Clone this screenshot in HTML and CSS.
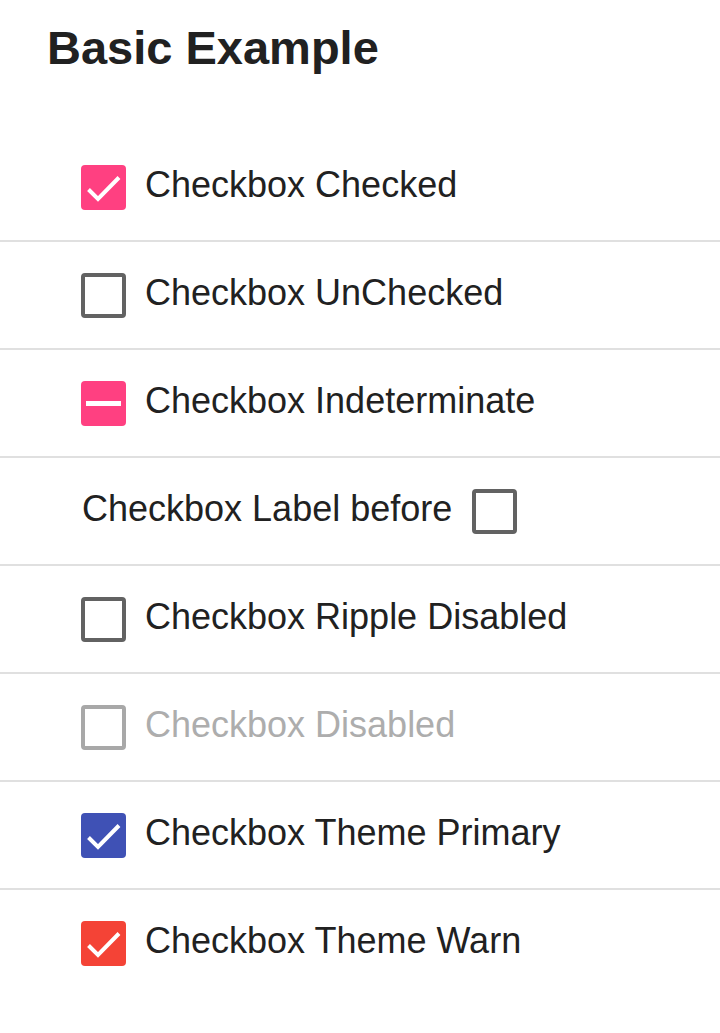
FILE: index.html
```html
<!DOCTYPE html>
<html lang="en">
<head>
<meta charset="utf-8">
<title>Basic Example</title>
<link rel="stylesheet" href="styles.css">
</head>
<body>
<div class="page">
  <h2 class="title">Basic Example</h2>
  <ul class="list">
    <li class="row">
      <span class="box box-accent">
        <svg class="check" viewBox="0 0 45 45"><polyline points="7.5,24.5 17,34 38,12.5"/></svg>
      </span>
      <span class="label">Checkbox Checked</span>
    </li>
    <li class="row">
      <span class="box box-empty"></span>
      <span class="label">Checkbox UnChecked</span>
    </li>
    <li class="row">
      <span class="box box-accent"><span class="dash"></span></span>
      <span class="label">Checkbox Indeterminate</span>
    </li>
    <li class="row">
      <span class="label label-before">Checkbox Label before</span>
      <span class="box box-empty"></span>
    </li>
    <li class="row">
      <span class="box box-empty"></span>
      <span class="label">Checkbox Ripple Disabled</span>
    </li>
    <li class="row row-disabled">
      <span class="box box-empty box-disabled"></span>
      <span class="label">Checkbox Disabled</span>
    </li>
    <li class="row">
      <span class="box box-primary">
        <svg class="check" viewBox="0 0 45 45"><polyline points="7.5,24.5 17,34 38,12.5"/></svg>
      </span>
      <span class="label">Checkbox Theme Primary</span>
    </li>
    <li class="row row-last">
      <span class="box box-warn">
        <svg class="check" viewBox="0 0 45 45"><polyline points="7.5,24.5 17,34 38,12.5"/></svg>
      </span>
      <span class="label">Checkbox Theme Warn</span>
    </li>
  </ul>
</div>
</body>
</html>
```

FILE: styles.css
```css
html, body {
  margin: 0;
  padding: 0;
  background: #ffffff;
}

.page {
  font-family: "Liberation Sans", Arial, sans-serif;
  color: #212121;
}

.title {
  margin: 0;
  box-sizing: border-box;
  height: 134px;
  padding: 21px 0 0 47px;
  font-size: 47px;
  font-weight: 700;
  line-height: 53px;
  color: #212121;
}

.list {
  list-style: none;
  margin: 0;
  padding: 0;
}

.row {
  display: flex;
  align-items: center;
  height: 106px;
  padding-left: 81px;
  border-bottom: 2px solid #e0e0e0;
}

.row-last {
  border-bottom: none;
}

.box {
  position: relative;
  flex: none;
  box-sizing: border-box;
  width: 45px;
  height: 45px;
  border-radius: 4px;
  display: flex;
  align-items: center;
  justify-content: center;
}

.box-empty {
  border: 4px solid #626262;
}

.box-disabled {
  border-color: #a8a8a8;
}

.box-accent {
  background: #ff4081;
}

.box-primary {
  background: #3f51b5;
}

.box-warn {
  background: #f44336;
}

.check {
  width: 45px;
  height: 45px;
  display: block;
}

.check polyline {
  fill: none;
  stroke: #ffffff;
  stroke-width: 4;
}

.dash {
  display: block;
  width: 35px;
  height: 5px;
  background: #ffffff;
}

.label {
  font-size: 36px;
  line-height: 42px;
  margin-left: 19px;
  margin-top: -4px;
}

.label-before {
  margin-left: 1px;
  margin-right: 20px;
}

.row-disabled .label {
  color: #adadad;
}
```
